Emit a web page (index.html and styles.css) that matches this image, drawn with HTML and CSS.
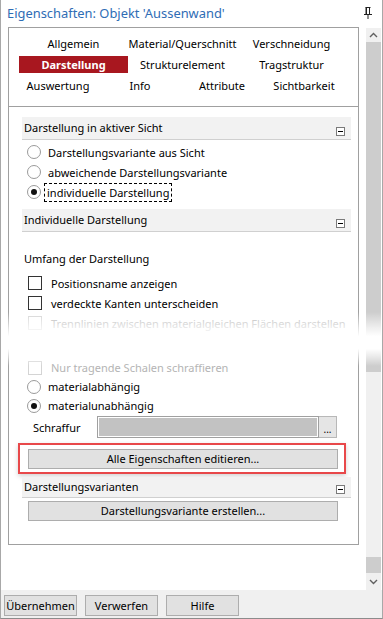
FILE: index.html
```html
<!DOCTYPE html>
<html lang="de">
<head>
  <meta charset="UTF-8">
  <title>Eigenschaften</title>
  <link rel="stylesheet" href="styles.css">
</head>
<body>

<div class="window">
  <div class="titlebar">
    <span class="title">Eigenschaften: Objekt 'Aussenwand'</span>
    <svg class="pin" width="8" height="12" viewBox="0 0 8 12">
      <path d="M1.5 0.5h5M2 0.5v7M2.5 1v6M5.5 1v6M0 7.5h8M4 8v4" stroke="#222" stroke-width="1" fill="none"/>
    </svg>
  </div>

  <div class="main">
    <div class="pane">
      <div class="panel">
        <div class="tabs">
          <div class="tabrow cols3">
            <span class="tab">Allgemein</span>
            <span class="tab">Material/Querschnitt</span>
            <span class="tab">Verschneidung</span>
          </div>
          <div class="tabrow cols3">
            <span class="tab active">Darstellung</span>
            <span class="tab">Strukturelement</span>
            <span class="tab">Tragstruktur</span>
          </div>
          <div class="tabrow cols4">
            <span class="tab">Auswertung</span>
            <span class="tab">Info</span>
            <span class="tab">Attribute</span>
            <span class="tab">Sichtbarkeit</span>
          </div>
        </div>

        <div class="content">
          <div class="section-head first">
            <span>Darstellung in aktiver Sicht</span>
            <span class="collapse"></span>
          </div>
          <div class="options">
            <div class="opt"><span class="radio"></span>Darstellungsvariante aus Sicht</div>
            <div class="opt"><span class="radio"></span>abweichende Darstellungsvariante</div>
            <div class="opt"><span class="radio checked"></span><span class="focus">individuelle Darstellung</span></div>
          </div>

          <div class="section-head second">
            <span>Individuelle Darstellung</span>
            <span class="collapse"></span>
          </div>
          <div class="label umfang">Umfang der Darstellung</div>
          <div class="opt check"><span class="box"></span>Positionsname anzeigen</div>
          <div class="opt check"><span class="box"></span>verdeckte Kanten unterscheiden</div>
          <div class="opt check disabled"><span class="box"></span>Trennlinien zwischen materialgleichen Flächen darstellen</div>
          <div class="label faded">Schraffur</div>

          <div class="opt check disabled lower"><span class="box"></span>Nur tragende Schalen schraffieren</div>
          <div class="opt tight"><span class="radio"></span>materialabhängig</div>
          <div class="opt tight"><span class="radio checked"></span>materialunabhängig</div>
          <div class="field-row">
            <span class="field-label">Schraffur</span>
            <span class="field"></span>
            <span class="dots">...</span>
          </div>

          <div class="highlight">
            <div class="btn wide">Alle Eigenschaften editieren...</div>
          </div>

          <div class="section-head third">
            <span>Darstellungsvarianten</span>
            <span class="collapse"></span>
          </div>
          <div class="btn wide create">Darstellungsvariante erstellen...</div>
        </div>
      </div>
    </div>

    <div class="scrollbar">
      <div class="arrow up">
        <svg width="9" height="6" viewBox="0 0 9 6"><path d="M1 5l3.5-3.5L8 5" stroke="#606060" stroke-width="1.4" fill="none"/></svg>
      </div>
      <div class="thumb top"></div>
      <div class="track"></div>
      <div class="thumb bottom"></div>
      <div class="arrow down">
        <svg width="9" height="6" viewBox="0 0 9 6"><path d="M1 1l3.5 3.5L8 1" stroke="#606060" stroke-width="1.4" fill="none"/></svg>
      </div>
    </div>
  </div>

  <div class="footer">
    <div class="btn small">Übernehmen</div>
    <div class="btn small">Verwerfen</div>
    <div class="btn small">Hilfe</div>
  </div>

  <div class="tear"></div>
</div>

</body>
</html>
```

FILE: styles.css
```css
body {
  margin: 0;
  font-family: "Noto Sans", "Open Sans", sans-serif;
  font-size: 11px;
  color: #000;
  background: #fff;
}
.window {
  position: relative;
  width: 383px;
  height: 619px;
  box-sizing: border-box;
  border-left: 1px solid #a8a8a8;
  border-right: 1px solid #a8a8a8;
  border-bottom: 1px solid #8c8c8c;
  background: #fff;
  overflow: hidden;
}
.titlebar {
  height: 27px;
  display: flex;
  align-items: center;
  justify-content: space-between;
  padding: 0 10px 2px 6px;
  box-sizing: border-box;
}
.title {
  color: #2f6db5;
  font-size: 12.9px;
}
.pin {
  margin-top: 1px;
}
.main {
  display: flex;
  height: 563px;
}
.pane {
  width: 365px;
  padding-left: 7px;
  box-sizing: border-box;
}
.panel {
  width: 351px;
  height: 518px;
  box-sizing: border-box;
  border: 1px solid #a0a0a0;
}
.tabs {
  padding: 5px 10px 10px;
  border-bottom: 1px solid #a0a0a0;
}
.tabrow {
  display: grid;
  height: 21px;
  align-items: center;
  text-align: center;
}
.cols3 {
  grid-template-columns: repeat(3, 109px);
}
.cols4 {
  grid-template-columns: repeat(4, 82px);
  margin-left: -2px;
}
.tab {
  line-height: 17px;
}
.tab.active {
  background: #a8171f;
  color: #fff;
  font-weight: bold;
}
.content {
  padding: 10px 7px 0 13px;
}
.section-head {
  position: relative;
  height: 22px;
  background: #f2f2f2;
  border-bottom: 1px solid #d0d0d0;
  padding-left: 2px;
  line-height: 21px;
}
.collapse {
  position: absolute;
  right: 6px;
  bottom: 3px;
  width: 7px;
  height: 7px;
  border: 1px solid #7a7a7a;
  background: #fff;
}
.collapse::after {
  content: "";
  position: absolute;
  left: 1px;
  top: 3px;
  width: 5px;
  height: 1px;
  background: #000;
}
.options {
  padding-top: 2px;
}
.opt {
  display: flex;
  align-items: center;
  height: 20px;
  padding-left: 5px;
  white-space: nowrap;
  overflow: hidden;
}
.opt.tight {
  height: 19px;
}
.radio {
  position: relative;
  width: 12px;
  height: 12px;
  border: 1px solid #9a9a9a;
  border-radius: 50%;
  margin-right: 7px;
  flex: none;
  background: #fff;
}
.radio.checked::after {
  content: "";
  position: absolute;
  left: 3px;
  top: 3px;
  width: 6px;
  height: 6px;
  border-radius: 50%;
  background: #111;
}
.focus {
  border: 1px dashed #000;
  padding: 0 2px;
  margin-left: -4px;
  line-height: 17px;
}
.section-head.second {
  margin-top: 7px;
}
.label {
  padding-left: 2px;
  height: 19px;
  line-height: 19px;
}
.umfang {
  margin-top: 17px;
  margin-bottom: 5px;
}
.check {
  padding-left: 6px;
}
.box {
  width: 12px;
  height: 12px;
  border: 1px solid #333;
  margin-right: 9px;
  flex: none;
}
.disabled {
  color: #b4b4b4;
}
.disabled .box {
  border-color: #d4d4d4;
}
.faded {
  color: #dcdcdc;
  height: 14px;
  line-height: 14px;
}
.lower {
  margin-top: 11px;
  height: 19px;
}
.field-row {
  display: flex;
  align-items: center;
  height: 22px;
  margin-top: 1px;
}
.field-label {
  width: 75px;
  padding-left: 11px;
  box-sizing: border-box;
  flex: none;
}
.field {
  width: 220px;
  height: 20px;
  border: 1px solid #a0a0a0;
  background: #c2c2c2;
  box-shadow: inset 0 0 0 1px #fff;
}
.dots {
  width: 17px;
  height: 20px;
  border: 1px solid #b8b8b8;
  border-left: none;
  background: #e5e5e5;
  text-align: center;
  line-height: 24px;
  font-size: 10px;
}
.highlight {
  margin: 5px 5px 0 -4px;
  padding: 4px 8px 3px;
  border: 2px solid #e8484a;
  box-shadow: 0 2px 5px rgba(0, 0, 0, 0.18);
}
.btn {
  box-sizing: border-box;
  border: 1px solid #adadad;
  background: #e1e1e1;
  text-align: center;
  height: 20px;
  line-height: 18px;
}
.btn.wide {
  width: 310px;
}
.section-head.third {
  margin-top: 3px;
  height: 20px;
  line-height: 19px;
}
.btn.create {
  margin: 3px 0 0 6px;
}
.scrollbar {
  width: 15px;
  display: flex;
  flex-direction: column;
  background: #f0f0f0;
  margin-top: 1px;
}
.arrow {
  height: 14px;
  display: flex;
  align-items: center;
  justify-content: center;
}
.arrow.down {
  height: 17px;
}
.thumb {
  background: #cdcdcd;
}
.thumb.top {
  height: 330px;
}
.track {
  flex: 1;
}
.thumb.bottom {
  height: 16px;
}
.footer {
  display: flex;
  gap: 8px;
  height: 28px;
  padding: 5px 0 0 3px;
  box-sizing: border-box;
  background: #f0f0f0;
}
.btn.small {
  width: 73px;
  height: 21px;
  line-height: 19px;
}
.tear {
  position: absolute;
  left: -1px;
  right: -1px;
  top: 312px;
  height: 54px;
  background: linear-gradient(to bottom,
    rgba(255, 255, 255, 0) 0,
    rgba(255, 255, 255, 0.7) 30%,
    #fff 45%,
    #fff 68%,
    rgba(255, 255, 255, 0.5) 85%,
    rgba(255, 255, 255, 0) 100%);
  pointer-events: none;
}
```
